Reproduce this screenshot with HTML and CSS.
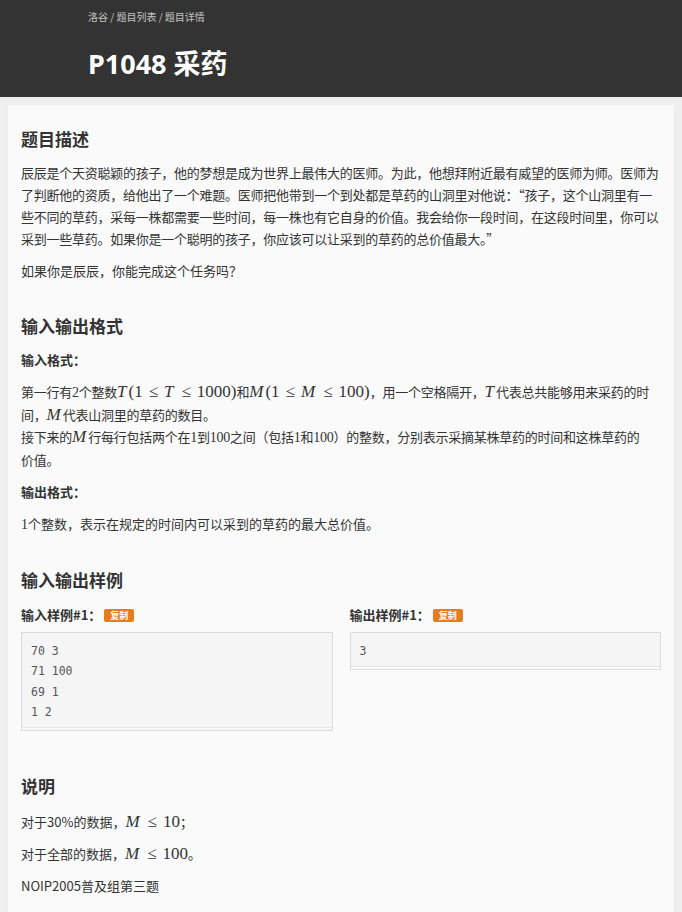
FILE: index.html
```html
<!DOCTYPE html>
<html lang="zh-CN">
<head>
<meta charset="utf-8">
<title>P1048 采药</title>
<link rel="stylesheet" href="styles.css">
</head>
<body>
<header class="top">
  <div class="crumbs">洛谷 / 题目列表 / 题目详情</div>
  <h1 class="title">P1048 采药</h1>
</header>
<main class="card">
  <section class="sec">
    <h2>题目描述</h2>
    <p class="tight">辰辰是个天资聪颖的孩子，他的梦想是成为世界上最伟大的医师。为此，他想拜附近最有威望的医师为师。医师为<br>了判断他的资质，给他出了一个难题。医师把他带到一个到处都是草药的山洞里对他说：“孩子，这个山洞里有一<br>些不同的草药，采每一株都需要一些时间，每一株也有它自身的价值。我会给你一段时间，在这段时间里，你可以<br>采到一些草药。如果你是一个聪明的孩子，你应该可以让采到的草药的总价值最大。”</p>
    <p>如果你是辰辰，你能完成这个任务吗？</p>
  </section>
  <section class="sec">
    <h2>输入输出格式</h2>
    <h3>输入格式：</h3>
    <p class="tight">第一行有<span class="num">2</span>个整数<span class="m"><i>T</i>(1<span class="rel">≤</span><i>T</i><span class="rel">≤</span>1000)</span>和<span class="m"><i>M</i>(1<span class="rel">≤</span><i>M</i><span class="rel">≤</span>100)</span>，用一个空格隔开，<span class="m"><i>T</i></span>代表总共能够用来采药的时<br>间，<span class="m"><i>M</i></span>代表山洞里的草药的数目。<br>接下来的<span class="m"><i>M</i></span>行每行包括两个在<span class="num">1</span>到<span class="num">100</span>之间（包括<span class="num">1</span>和<span class="num">100</span>）的整数，分别表示采摘某株草药的时间和这株草药的<br>价值。</p>
    <h3>输出格式：</h3>
    <p><span class="num">1</span>个整数，表示在规定的时间内可以采到的草药的最大总价值。</p>
  </section>
  <section class="sec">
    <h2>输入输出样例</h2>
    <div class="samples">
      <div class="sample">
        <div class="label">输入样例#1： <span class="copy">复制</span></div>
        <pre class="box">70 3
71 100
69 1
1 2</pre>
      </div>
      <div class="sample">
        <div class="label">输出样例#1： <span class="copy">复制</span></div>
        <pre class="box">3</pre>
      </div>
    </div>
  </section>
  <section class="sec note">
    <h2>说明</h2>
    <p>对于30%的数据，<span class="m"><i>M</i><span class="rel">≤</span>10</span>；</p>
    <p>对于全部的数据，<span class="m"><i>M</i><span class="rel">≤</span>100</span>。</p>
    <p>NOIP2005普及组第三题</p>
  </section>
</main>
</body>
</html>
```

FILE: styles.css
```css
html, body {
  margin: 0;
  padding: 0;
}
body {
  background: #efefef;
  color: #333;
  font-family: "Noto Sans CJK SC", "Noto Sans", sans-serif;
  font-size: 13px;
}
.top {
  background: #333;
  padding: 10px 0 15px 88px;
}
.crumbs {
  color: #c4c4c4;
  font-size: 10px;
  line-height: 14px;
}
.title {
  margin: 22px 0 0;
  color: #fff;
  font-family: "Noto Sans", "Noto Sans CJK SC", sans-serif;
  font-size: 27px;
  font-weight: 700;
  line-height: 36px;
}
.card {
  display: block;
  margin: 8px 8px 0;
  background: #fafafa;
  padding: 0 13px 20px;
  box-shadow: 0 1px 2px rgba(0,0,0,0.04);
}
.sec {
  padding-top: 22px;
}
h2 {
  margin: 0 0 11px;
  font-size: 17px;
  font-weight: 700;
  line-height: 24px;
  color: #333;
}
h3 {
  margin: 0 0 10px;
  font-size: 13px;
  font-weight: 700;
  line-height: 22px;
}
p {
  margin: 0 0 10px;
  line-height: 22px;
}
.tight {
  letter-spacing: -0.25px;
}
.num {
  font-family: "Liberation Serif", serif;
  font-size: 14px;
}
.m {
  font-family: "Liberation Serif", serif;
  font-size: 17px;
  line-height: 1;
  letter-spacing: 0;
}
.m i {
  font-style: italic;
  padding-right: 2px;
}
.rel {
  padding: 0 6px;
}
.samples {
  display: grid;
  grid-template-columns: 1fr 1fr;
  column-gap: 17px;
  align-items: start;
  margin-bottom: 21px;
}
.label {
  padding-top: 1px;
  font-weight: 700;
  line-height: 22px;
  margin-bottom: 6px;
}
.copy {
  display: inline-block;
  background: #e27d22;
  color: #fff;
  font-size: 9px;
  font-weight: 700;
  line-height: 13px;
  padding: 0 6px;
  border-radius: 2px;
  vertical-align: 1px;
}
.box {
  margin: 0;
  background: #f5f5f5;
  border: 1px solid #ddd;
  box-shadow: inset 0 -2px 0 #fafafa, inset 0 -3px 0 #e6e6e6;
  padding: 8px 9px;
  font-family: "DejaVu Sans Mono", monospace;
  font-size: 11.5px;
  line-height: 20.3px;
  color: #555;
}
.note h2 {
  margin-bottom: 13px;
}
```
